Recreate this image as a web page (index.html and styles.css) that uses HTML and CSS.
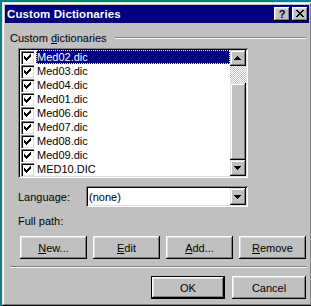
FILE: index.html
```html
<!DOCTYPE html>
<html>
<head>
<meta charset="utf-8">
<link rel="stylesheet" href="styles.css">
</head>
<body>
<div class="window">
  <div class="titlebar">
    <span class="title">Custom Dictionaries</span>
    <div class="tbtns">
      <button class="tb help">?</button>
      <button class="tb close"><svg width="16" height="14" viewBox="0 0 16 14"><path d="M4 3h2v1h-2z M10 3h2v1h-2z M5 4h2v1h-2z M9 4h2v1h-2z M6 5h4v1h-4z M7 6h2v1h-2z M6 7h4v1h-4z M5 8h2v1h-2z M9 8h2v1h-2z M4 9h2v1h-2z M10 9h2v1h-2z" fill="#000"/></svg></button>
    </div>
  </div>
  <div class="content">
    <div class="group-head"><span>Custom <u>d</u>ictionaries</span><div class="groove"></div></div>
    <div class="listbox">
      <ul class="items">
        <li class="item"><span class="check"><svg width="13" height="13" viewBox="0 0 13 13"><path d="M3 5h1v3h-1z M4 6h1v3h-1z M5 7h1v3h-1z M6 6h1v3h-1z M7 5h1v3h-1z M8 4h1v3h-1z M9 3h1v3h-1z" fill="#000"/></svg></span><span class="name selected">Med02.dic</span></li>
        <li class="item"><span class="check"><svg width="13" height="13" viewBox="0 0 13 13"><path d="M3 5h1v3h-1z M4 6h1v3h-1z M5 7h1v3h-1z M6 6h1v3h-1z M7 5h1v3h-1z M8 4h1v3h-1z M9 3h1v3h-1z" fill="#000"/></svg></span><span class="name">Med03.dic</span></li>
        <li class="item"><span class="check"><svg width="13" height="13" viewBox="0 0 13 13"><path d="M3 5h1v3h-1z M4 6h1v3h-1z M5 7h1v3h-1z M6 6h1v3h-1z M7 5h1v3h-1z M8 4h1v3h-1z M9 3h1v3h-1z" fill="#000"/></svg></span><span class="name">Med04.dic</span></li>
        <li class="item"><span class="check"><svg width="13" height="13" viewBox="0 0 13 13"><path d="M3 5h1v3h-1z M4 6h1v3h-1z M5 7h1v3h-1z M6 6h1v3h-1z M7 5h1v3h-1z M8 4h1v3h-1z M9 3h1v3h-1z" fill="#000"/></svg></span><span class="name">Med01.dic</span></li>
        <li class="item"><span class="check"><svg width="13" height="13" viewBox="0 0 13 13"><path d="M3 5h1v3h-1z M4 6h1v3h-1z M5 7h1v3h-1z M6 6h1v3h-1z M7 5h1v3h-1z M8 4h1v3h-1z M9 3h1v3h-1z" fill="#000"/></svg></span><span class="name">Med06.dic</span></li>
        <li class="item"><span class="check"><svg width="13" height="13" viewBox="0 0 13 13"><path d="M3 5h1v3h-1z M4 6h1v3h-1z M5 7h1v3h-1z M6 6h1v3h-1z M7 5h1v3h-1z M8 4h1v3h-1z M9 3h1v3h-1z" fill="#000"/></svg></span><span class="name">Med07.dic</span></li>
        <li class="item"><span class="check"><svg width="13" height="13" viewBox="0 0 13 13"><path d="M3 5h1v3h-1z M4 6h1v3h-1z M5 7h1v3h-1z M6 6h1v3h-1z M7 5h1v3h-1z M8 4h1v3h-1z M9 3h1v3h-1z" fill="#000"/></svg></span><span class="name">Med08.dic</span></li>
        <li class="item"><span class="check"><svg width="13" height="13" viewBox="0 0 13 13"><path d="M3 5h1v3h-1z M4 6h1v3h-1z M5 7h1v3h-1z M6 6h1v3h-1z M7 5h1v3h-1z M8 4h1v3h-1z M9 3h1v3h-1z" fill="#000"/></svg></span><span class="name">Med09.dic</span></li>
        <li class="item"><span class="check"><svg width="13" height="13" viewBox="0 0 13 13"><path d="M3 5h1v3h-1z M4 6h1v3h-1z M5 7h1v3h-1z M6 6h1v3h-1z M7 5h1v3h-1z M8 4h1v3h-1z M9 3h1v3h-1z" fill="#000"/></svg></span><span class="name">MED10.DIC</span></li>
      </ul>
      <div class="scrollbar">
        <div class="sbtn"><svg width="16" height="16" viewBox="0 0 16 16"><path d="M7 6h1v1h-1z M6 7h3v1h-3z M5 8h5v1h-5z M4 9h7v1h-7z" fill="#000"/></svg></div>
        <div class="track-top"></div>
        <div class="thumb"></div>
        <div class="track-rest"></div>
        <div class="sbtn"><svg width="16" height="16" viewBox="0 0 16 16"><path d="M4 6h7v1h-7z M5 7h5v1h-5z M6 8h3v1h-3z M7 9h1v1h-1z" fill="#000"/></svg></div>
      </div>
    </div>
    <div class="lang-row">
      <span class="lang-label">Language:</span>
      <div class="combo">
        <span class="combo-text">(none)</span>
        <div class="sbtn"><svg width="16" height="17" viewBox="0 0 16 17"><path d="M4 7h7v1h-7z M5 8h5v1h-5z M6 9h3v1h-3z M7 10h1v1h-1z" fill="#000"/></svg></div>
      </div>
    </div>
    <div class="path">Full path:</div>
    <div class="btn-row">
      <button class="btn"><u>N</u>ew...</button>
      <button class="btn"><u>E</u>dit</button>
      <button class="btn"><u>A</u>dd...</button>
      <button class="btn"><u>R</u>emove</button>
    </div>
    <div class="sep"></div>
    <div class="btn-row ok-row">
      <button class="btn wide default">OK</button>
      <button class="btn wide">Cancel</button>
    </div>
  </div>
</div>
</body>
</html>
```

FILE: styles.css
```css
html, body {
  margin: 0;
  padding: 0;
  background: #0f7d86;
  overflow: hidden;
  width: 311px;
  height: 306px;
}
* { box-sizing: border-box; }
.window {
  margin: 2px 0 0 2px;
  width: 310px;
  height: 304px;
  background: #c0c0c0;
  padding: 3px;
  box-shadow: inset -1px -1px #000, inset 1px 1px #dfdfdf, inset -2px -2px #808080, inset 2px 2px #fff;
  font-family: "Liberation Sans", Arial, sans-serif;
  font-size: 11px;
  color: #000;
  display: flex;
  flex-direction: column;
}
.titlebar {
  height: 18px;
  background: #000080;
  display: flex;
  align-items: center;
  justify-content: space-between;
}
.title {
  color: #fff;
  font-weight: bold;
  font-size: 11.5px;
  padding-left: 2px;
  letter-spacing: 0.1px;
}
.tbtns {
  display: flex;
  gap: 2px;
  margin-right: 1px;
}
.tb {
  width: 16px;
  height: 14px;
  padding: 0;
  border: none;
  background: #c0c0c0;
  box-shadow: inset -1px -1px #000, inset 1px 1px #fff, inset -2px -2px #808080, inset 2px 2px #dfdfdf;
  display: flex;
  align-items: center;
  justify-content: center;
  font-family: "Liberation Sans", Arial, sans-serif;
  font-weight: bold;
  font-size: 11px;
  color: #000;
  line-height: 14px;
}
.tb svg { display: block; }
.content {
  flex: 1;
  display: flex;
  flex-direction: column;
}
.group-head {
  margin-top: 7px;
  height: 16px;
  padding-left: 5px;
  display: flex;
  align-items: center;
}
.groove {
  flex: 1;
  height: 2px;
  border-top: 1px solid #808080;
  border-bottom: 1px solid #fff;
  margin: 0 3px 0 8px;
}
.listbox {
  margin: 2px 0 0 13px;
  width: 230px;
  height: 130px;
  padding: 2px;
  background: #fff;
  box-shadow: inset 1px 1px #808080, inset -1px -1px #fff, inset 2px 2px #000, inset -2px -2px #dfdfdf;
  display: flex;
}
.items {
  list-style: none;
  margin: 0;
  padding: 0;
  flex: 1;
  display: flex;
  flex-direction: column;
}
.item {
  height: 14px;
  display: flex;
  align-items: center;
}
.check {
  width: 13px;
  height: 13px;
  margin-left: 1px;
  background: #fff;
  box-shadow: inset 1px 1px #808080, inset 2px 2px #000, inset -1px -1px #dfdfdf;
}
.check svg { display: block; }
.name {
  margin-left: 2px;
  flex: 1;
  height: 14px;
  line-height: 14px;
  padding-left: 1px;
}
.name.selected {
  background: #000080;
  color: #fff;
  outline: 1px dotted #ffff80;
  outline-offset: -1px;
}
.scrollbar {
  width: 16px;
  display: flex;
  flex-direction: column;
}
.sbtn {
  width: 16px;
  height: 16px;
  background: #c0c0c0;
  box-shadow: inset -1px -1px #000, inset 1px 1px #dfdfdf, inset -2px -2px #808080, inset 2px 2px #fff;
}
.sbtn svg { display: block; }
.track-top {
  height: 17px;
  background: repeating-conic-gradient(#c0c0c0 0 25%, #fff 0 50%) 0 0 / 2px 2px;
}
.thumb {
  height: 77px;
  background: #c0c0c0;
  box-shadow: inset -1px -1px #000, inset 1px 1px #dfdfdf, inset -2px -2px #808080, inset 2px 2px #fff;
}
.track-rest {
  flex: 1;
  background: repeating-conic-gradient(#c0c0c0 0 25%, #fff 0 50%) 0 0 / 2px 2px;
}
.lang-row {
  margin: 8px 0 0 13px;
  height: 21px;
  display: flex;
  align-items: center;
}
.lang-label {
  width: 68px;
}
.combo {
  width: 162px;
  height: 21px;
  padding: 2px;
  background: #fff;
  box-shadow: inset 1px 1px #808080, inset -1px -1px #fff, inset 2px 2px #000, inset -2px -2px #dfdfdf;
  display: flex;
  align-items: center;
}
.combo-text {
  flex: 1;
  padding-left: 1px;
}
.combo .sbtn { height: 17px; }
.path {
  margin: 7px 0 0 13px;
  height: 14px;
  line-height: 14px;
}
.btn-row {
  margin: 8px 0 0 15px;
  display: flex;
  gap: 6px;
}
.btn {
  width: 67px;
  height: 23px;
  padding: 0;
  border: none;
  background: #c0c0c0;
  box-shadow: inset -1px -1px #000, inset 1px 1px #fff, inset -2px -2px #808080, inset 2px 2px #dfdfdf;
  font-family: "Liberation Sans", Arial, sans-serif;
  font-size: 11px;
  color: #000;
}
.sep {
  margin: 7px 0 0 5px;
  width: 296px;
  height: 2px;
  border-top: 1px solid #808080;
  border-bottom: 1px solid #fff;
}
.ok-row {
  margin: 8px 0 0 146px;
  gap: 7px;
}
.btn.wide { width: 74px; }
.btn.default {
  border: 1px solid #000;
  box-shadow: inset -1px -1px #000, inset 1px 1px #fff, inset -2px -2px #808080, inset 2px 2px #dfdfdf;
}
```
